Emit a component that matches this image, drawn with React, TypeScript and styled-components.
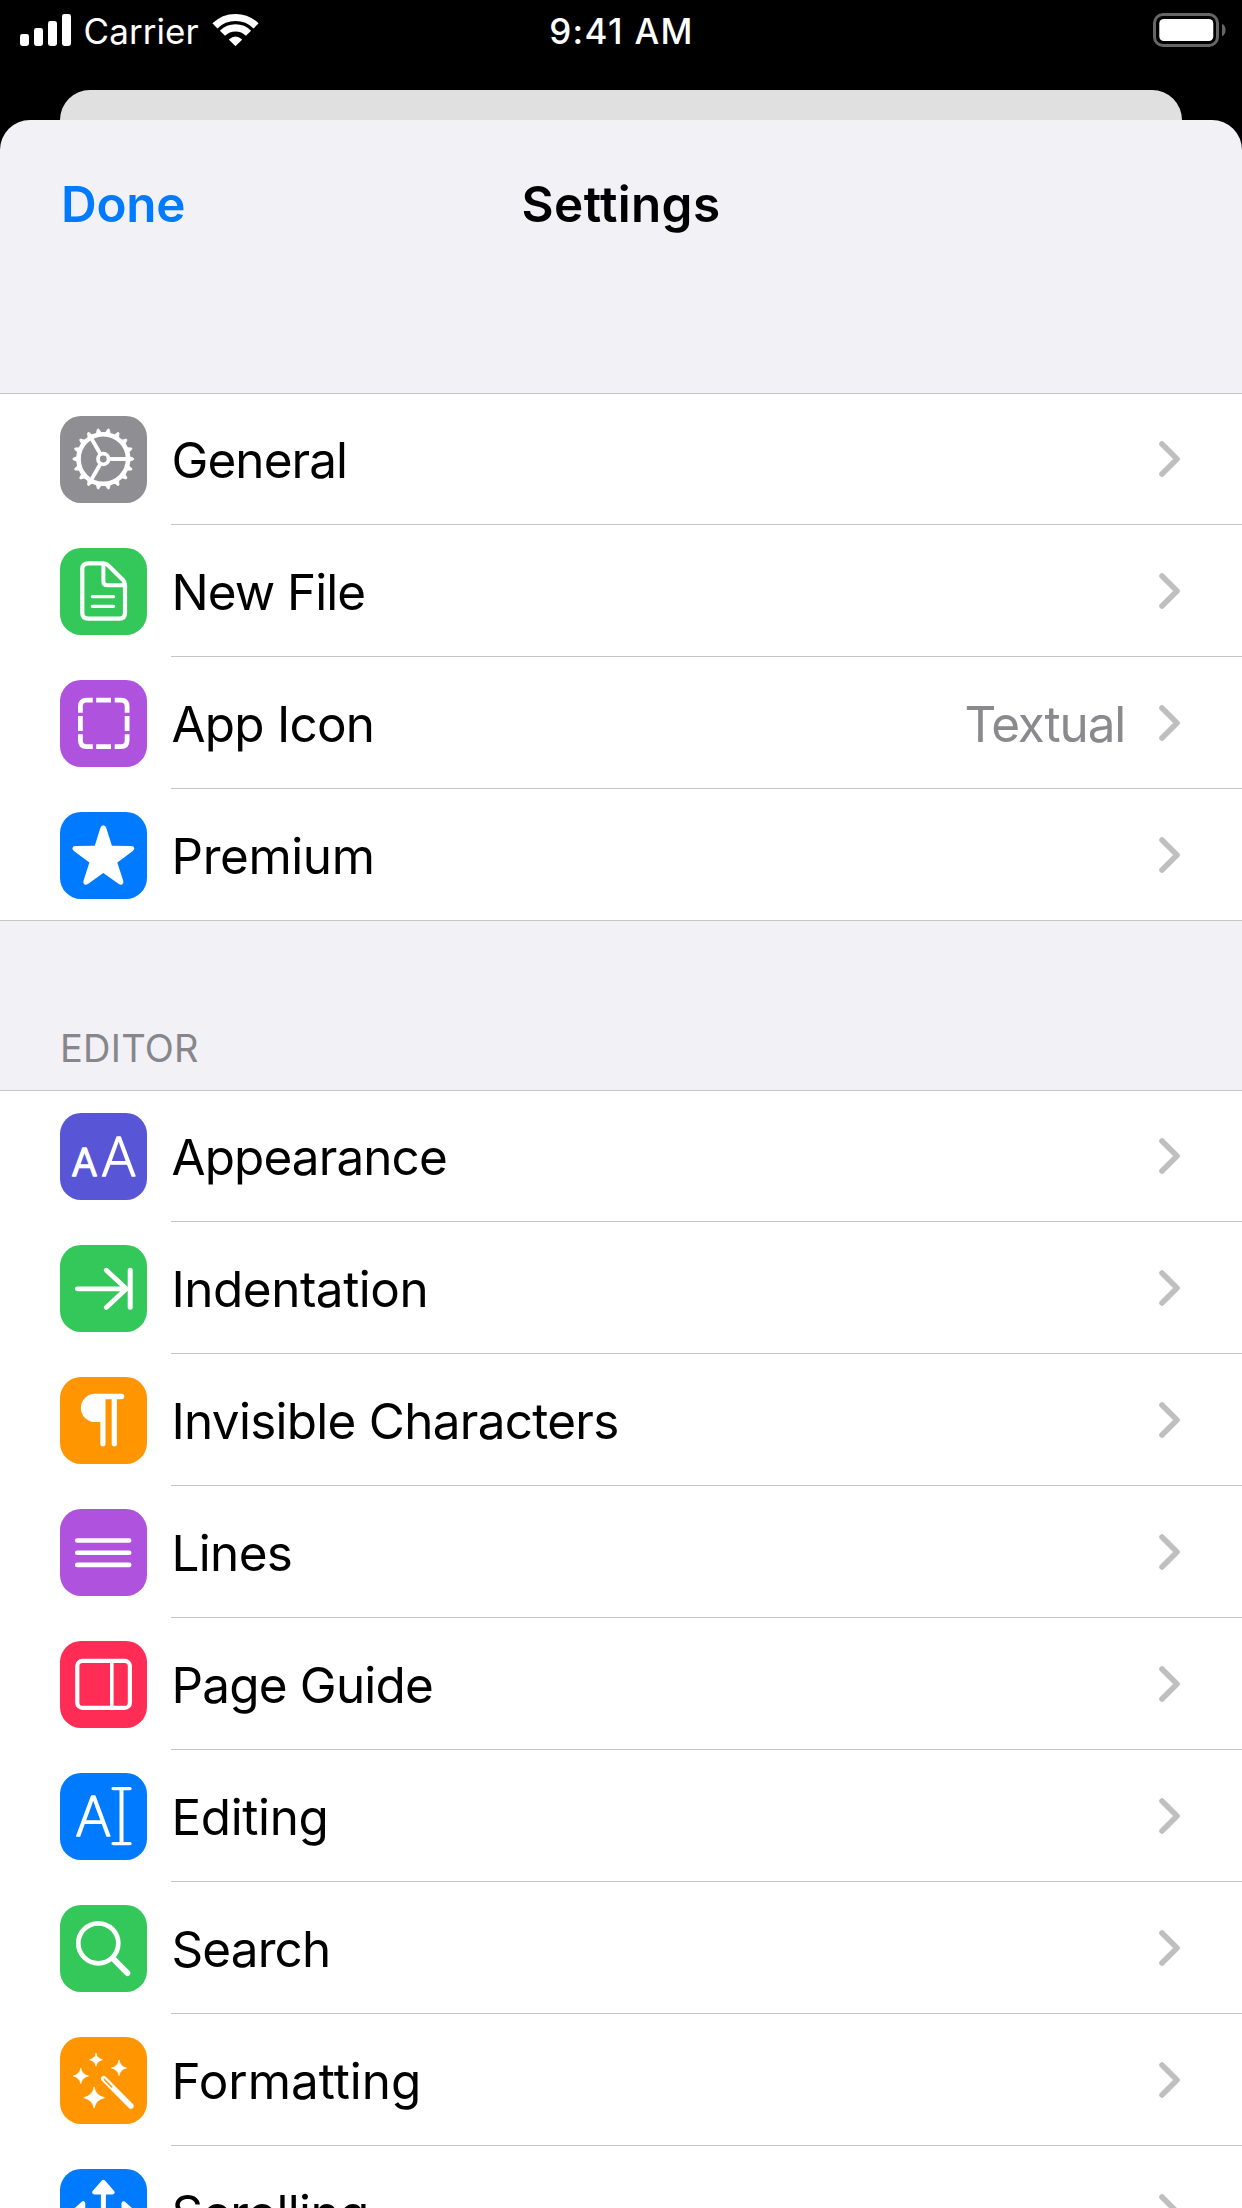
import React from "react";
import styled, { createGlobalStyle } from "styled-components";

const GlobalStyle = createGlobalStyle`
  *, *::before, *::after { box-sizing: border-box; }
  body {
    margin: 0;
    background: #000;
    font-family: Inter, "Liberation Sans", sans-serif;
  }
`;

const Screen = styled.div`
  display: flex;
  flex-direction: column;
  width: 1242px;
  height: 2208px;
  overflow: hidden;
  background: #000;
`;

const StatusBar = styled.header`
  display: grid;
  grid-template-columns: 1fr auto 1fr;
  align-items: center;
  flex: none;
  height: 60px;
  margin-bottom: 30px;
  padding: 0 16px 0 20px;
  color: #fff;
  font-size: 35px;
  line-height: 42px;
`;

const Network = styled.div`
  display: flex;
  align-items: center;
`;

const Carrier = styled.span`
  margin: 2px 12px 0 12.5px;
  letter-spacing: 0.08px;
`;

const Time = styled.time`
  padding: 2px 3px 0 0;
  font-weight: 500;
  letter-spacing: 1.33px;
`;

const BatteryIcon = styled.svg`
  justify-self: end;
`;

const BackCard = styled.div`
  flex: none;
  height: 30px;
  margin: 0 60px;
  background: #e0e0e0;
  border-radius: 30px 30px 0 0;
`;

const Sheet = styled.main`
  flex: 1;
  min-height: 0;
  overflow: hidden;
  background: #f2f1f6;
  border-radius: 30px 30px 0 0;
`;

const NavBar = styled.nav`
  display: grid;
  grid-template-columns: 1fr auto 1fr;
  align-items: start;
  height: 273px;
  padding: 53px 60px 0;
  line-height: 62px;
`;

const DoneButton = styled.button`
  justify-self: start;
  padding: 0 0 0 1px;
  border: 0;
  background: none;
  color: #007aff;
  font: inherit;
  font-size: 49.4px;
  font-weight: 600;
  letter-spacing: -0.2px;
`;

const Title = styled.h1`
  margin: 0;
  font-size: 49.4px;
  font-weight: 600;
  letter-spacing: 0.37px;
`;

const SectionTitle = styled.h2`
  display: flex;
  align-items: flex-end;
  height: 169px;
  margin: 0;
  padding: 0 60px 19px;
  color: #86868b;
  font-size: 38px;
  font-weight: 400;
  line-height: 46px;
  letter-spacing: 0.22px;
`;

const List = styled.ul`
  margin: 0;
  padding: 0;
  list-style: none;
  background: #fff;
  border-top: 1px solid #c6c6c8;
  border-bottom: 1px solid #c6c6c8;
`;

const Row = styled.li`
  display: flex;
  height: 132px;
  padding-left: 60px;

  &:first-child { height: 131px; }
  &:last-child { height: 131px; }
`;

const Tile = styled.span<{ $color: string }>`
  flex: none;
  width: 87px;
  height: 87px;
  margin: 23px 24px 0 0;
  border-radius: 21px;
  background: ${(p) => p.$color};

  ${Row}:first-child & { margin-top: 22px; }

  svg { display: block; }
`;

const RowBody = styled.div`
  display: flex;
  flex: 1;
  align-items: center;
  padding: 3px 60px 0 0;
  border-bottom: 1px solid #c6c6c8;

  ${Row}:first-child & { padding-top: 2px; }
  ${Row}:last-child & { border-bottom: 0; }
`;

const Label = styled.span<{ $tracking: number }>`
  flex: 1;
  padding-left: 0.5px;
  color: #000;
  font-size: 49.4px;
  line-height: 60px;
  letter-spacing: ${(p) => p.$tracking}px;
`;

const Value = styled.span`
  margin-right: 32px;
  color: #8a8a8e;
  font-size: 49.4px;
  line-height: 60px;
  letter-spacing: -1.17px;
`;

const ChevronIcon = styled.svg`
  flex: none;
  margin-top: -2px;
`;

const Glyph = styled.svg.attrs({ width: 87, height: 87, viewBox: "0 0 87 87" })`
  fill: none;
  stroke: #fff;
  stroke-width: 4.2px;
  stroke-linecap: round;
  stroke-linejoin: round;
`;

const GlyphLetter = styled.text<{ $weight: number }>`
  font-family: Inter, "Liberation Sans", sans-serif;
  font-weight: ${(p) => p.$weight};
  fill: #fff;
  stroke-width: 1.6px;
`;

const Chevron = () => (
  <ChevronIcon width="25" height="40" viewBox="0 0 25 40" fill="none" stroke="#bfbfbf" strokeWidth="5.6" strokeLinecap="round" strokeLinejoin="round">
    <path d="M5 5L20 20L5 35" />
  </ChevronIcon>
);

const GearGlyph = () => (
  <Glyph>
    <circle cx="43.3" cy="43" r="24.8" strokeWidth="4.6" />
    {Array.from({ length: 18 }, (_, i) => (
      <path
        key={i}
        transform={`rotate(${i * 20} 43.3 43)`}
        d="M69 40.4L73.2 42.1Q74.6 43 73.2 43.9L69 45.6Z"
        fill="#fff"
        strokeWidth="0.8"
      />
    ))}
    <circle cx="43.3" cy="43" r="5.3" strokeWidth="3.8" />
    {[0, 120, 240].map((angle) => (
      <path key={angle} transform={`rotate(${angle} 43.3 43)`} d="M50 43H68" strokeWidth="3.9" strokeLinecap="butt" />
    ))}
  </Glyph>
);

const FileGlyph = () => (
  <Glyph>
    <path d="M28.3 15.4H43.5Q46.4 15.4 48.4 17.4L63 32Q65 34 65 37V65Q65 70.7 59.3 70.7H28.3Q22.3 70.7 22.3 65V21Q22.3 15.4 28.3 15.4Z" />
    <path d="M43.4 16V33.5Q43.4 37.3 47.2 37.3H64.5" strokeWidth="4" />
    <path d="M32.3 48.6H53.6M32.3 58.3H53.6" strokeWidth="3.2" />
  </Glyph>
);

const DashedSquareGlyph = () => (
  <Glyph>
    <g strokeWidth="4.8" strokeLinecap="butt">
      <path d="M20.4 32.7V26.4Q20.4 20.2 26.6 20.2H32.8" />
      <path d="M54.7 20.2H60.9Q67.1 20.2 67.1 26.4V32.7" />
      <path d="M67.1 54.3V60.5Q67.1 66.7 60.9 66.7H54.7" />
      <path d="M32.8 66.7H26.6Q20.4 66.7 20.4 60.5V54.3" />
      <path d="M36.2 20.2H51M36.2 66.7H51M20.4 36.1V50.9M67.1 36.1V50.9" />
    </g>
  </Glyph>
);

const StarGlyph = () => (
  <Glyph>
    <path
      stroke="none"
      fill="#fff"
      d="M34.8 33.8L40.4 15.8Q41.2 13.3 43.3 13.3Q45.4 13.3 46.2 15.8L51.9 33.8L71.2 34Q73.9 34.1 74.3 36Q74.6 37.6 72.5 39.2L57.3 50.4L63.2 68.8Q63.8 71.1 62.4 72.3Q60.9 73.5 58.8 72L43.3 60.9L27.9 72Q25.8 73.5 24.3 72.3Q22.9 71.1 23.5 68.8L29.4 50.4L14.2 39.2Q12.1 37.6 12.4 36Q12.8 34.1 15.5 34Z"
    />
  </Glyph>
);

const LettersGlyph = () => (
  <Glyph>
    <GlyphLetter $weight={300} x="11.6" y="63.2" fontSize="38.5">A</GlyphLetter>
    <GlyphLetter $weight={200} x="40.9" y="63.2" fontSize="54">A</GlyphLetter>
  </Glyph>
);

const IndentGlyph = () => (
  <Glyph>
    <path d="M17.3 43.8H66" strokeWidth="4.8" />
    <path d="M46.3 25.2L66.3 43.8L46.3 62.4" strokeWidth="4.8" />
    <path d="M70.2 25.3V62.3" strokeWidth="5" />
  </Glyph>
);

const PilcrowGlyph = () => (
  <Glyph>
    <path stroke="none" fill="#fff" d="M35 16.8H61.5Q64.3 16.8 64.3 19.5Q64.3 22.3 61.5 22.3H56.9V66.8Q56.9 69.4 54.3 69.4Q51.7 69.4 51.7 66.8V22.3H45.5V66.8Q45.5 69.4 42.9 69.4Q40.3 69.4 40.3 66.8V45.1H35A14.15 14.15 0 0 1 35 16.8Z" />
  </Glyph>
);

const LinesGlyph = () => (
  <Glyph>
    <path d="M17.2 31.5H69.2M17.2 43.7H69.2M17.2 55.9H69.2" strokeWidth="4.6" />
  </Glyph>
);

const PageGuideGlyph = () => (
  <Glyph>
    <rect x="17.3" y="19.9" width="52.6" height="47" rx="5.2" />
    <path d="M51.8 20V67" strokeWidth="3.6" />
  </Glyph>
);

const EditingGlyph = () => (
  <Glyph>
    <GlyphLetter $weight={200} x="15.2" y="63.2" fontSize="55">A</GlyphLetter>
    <path d="M53.1 15.6H70M53.1 70.6H70" strokeWidth="3.4" />
    <path d="M61.5 16V70" strokeWidth="4" />
  </Glyph>
);

const SearchGlyph = () => (
  <Glyph>
    <circle cx="38.3" cy="38.3" r="20" strokeWidth="4.7" />
    <path d="M53 53.5L67.3 68" strokeWidth="6" />
  </Glyph>
);

const sparkle = (x: number, y: number, r: number) => {
  const k = r * 0.2;
  return `M${x} ${y - r}Q${x + k * 0.7} ${y - k} ${x + r} ${y}Q${x + k * 0.7} ${y + k} ${x} ${y + r}Q${x - k * 0.7} ${y + k} ${x - r} ${y}Q${x - k * 0.7} ${y - k} ${x} ${y - r}Z`;
};

const WandGlyph = () => (
  <Glyph>
    <g fill="#fff" strokeWidth="0.7">
      <path d={sparkle(36, 22.7, 6.4)} />
      <path d={sparkle(59, 31, 7.6)} />
      <path d={sparkle(20.8, 39, 7.6)} />
      <path d={sparkle(34.1, 60.7, 10.4)} />
    </g>
    <path d="M43.8 41.8L70.9 69" strokeWidth="5.6" />
    <path d="M44.4 42.5L51.8 50" stroke="#ff9500" strokeWidth="1.5" />
  </Glyph>
);

const ScrollGlyph = () => (
  <Glyph>
    {[0, 90, 180, 270].map((angle) => (
      <g key={angle} transform={`rotate(${angle} 43.4 43.5)`}>
        <path d="M43.4 43.5V24" strokeWidth="5" strokeLinecap="butt" />
        <path d="M43.4 13L52.6 23.3H34.2Z" fill="#fff" />
      </g>
    ))}
  </Glyph>
);

interface Item {
  label: string;
  color: string;
  tracking: number;
  icon: React.ReactNode;
  value?: string;
}

const palette = {
  gray: "#8e8e93",
  green: "#34c759",
  purple: "#af52de",
  blue: "#007aff",
  indigo: "#5856d6",
  orange: "#ff9500",
  pink: "#ff2d55",
};

const general: Item[] = [
  { label: "General", color: palette.gray, tracking: -0.9, icon: <GearGlyph /> },
  { label: "New File", color: palette.green, tracking: -0.97, icon: <FileGlyph /> },
  { label: "App Icon", color: palette.purple, tracking: -0.75, icon: <DashedSquareGlyph />, value: "Textual" },
  { label: "Premium", color: palette.blue, tracking: -0.4, icon: <StarGlyph /> },
];

const editor: Item[] = [
  { label: "Appearance", color: palette.indigo, tracking: -0.88, icon: <LettersGlyph /> },
  { label: "Indentation", color: palette.green, tracking: -0.45, icon: <IndentGlyph /> },
  { label: "Invisible Characters", color: palette.orange, tracking: -0.7, icon: <PilcrowGlyph /> },
  { label: "Lines", color: palette.purple, tracking: -0.64, icon: <LinesGlyph /> },
  { label: "Page Guide", color: palette.pink, tracking: -0.78, icon: <PageGuideGlyph /> },
  { label: "Editing", color: palette.blue, tracking: -0.36, icon: <EditingGlyph /> },
  { label: "Search", color: palette.green, tracking: -0.85, icon: <SearchGlyph /> },
  { label: "Formatting", color: palette.orange, tracking: 0, icon: <WandGlyph /> },
  { label: "Scrolling", color: palette.blue, tracking: -0.6, icon: <ScrollGlyph /> },
];

const SettingsList = ({ items }: { items: Item[] }) => (
  <List>
    {items.map((item) => (
      <Row key={item.label}>
        <Tile $color={item.color}>{item.icon}</Tile>
        <RowBody>
          <Label $tracking={item.tracking}>{item.label}</Label>
          {item.value && <Value>{item.value}</Value>}
          <Chevron />
        </RowBody>
      </Row>
    ))}
  </List>
);

export default function App() {
  return (
    <>
      <GlobalStyle />
      <Screen>
        <StatusBar>
          <Network>
            <svg width="51" height="32" viewBox="0 0 51 32" fill="#fff">
              <rect x="0" y="20" width="9" height="12" rx="2.4" />
              <rect x="14" y="14" width="9" height="18" rx="2.4" />
              <rect x="28" y="7" width="9" height="25" rx="2.4" />
              <rect x="42" y="0" width="9" height="32" rx="2.4" />
            </svg>
            <Carrier>Carrier</Carrier>
            <svg width="50" height="34" viewBox="0 0 50 34" fill="none" stroke="#fff">
              <path d="M3.9 12.9A29.4 29.4 0 0 1 45.1 12.9" strokeWidth="7.2" />
              <path d="M11.5 20.3A18.4 18.4 0 0 1 37.5 20.3" strokeWidth="7.2" />
              <path d="M24.5 32.3L18.6 26.6Q24.5 21.8 30.4 26.6Z" fill="#fff" strokeWidth="1.2" strokeLinejoin="round" />
            </svg>
          </Network>
          <Time>9:41 AM</Time>
          <BatteryIcon width="73" height="34" viewBox="0 0 73 34">
            <rect x="1.5" y="1.5" width="63" height="31" rx="8.5" fill="none" stroke="#666" strokeWidth="3" />
            <rect x="6.3" y="6" width="54" height="22" rx="4.5" fill="#fff" />
            <path d="M69 10.8Q72.6 12.6 72.6 17Q72.6 21.4 69 23.2Z" fill="#666" />
          </BatteryIcon>
        </StatusBar>
        <BackCard />
        <Sheet>
          <NavBar>
            <DoneButton type="button">Done</DoneButton>
            <Title>Settings</Title>
          </NavBar>
          <SettingsList items={general} />
          <SectionTitle>EDITOR</SectionTitle>
          <SettingsList items={editor} />
        </Sheet>
      </Screen>
    </>
  );
}
